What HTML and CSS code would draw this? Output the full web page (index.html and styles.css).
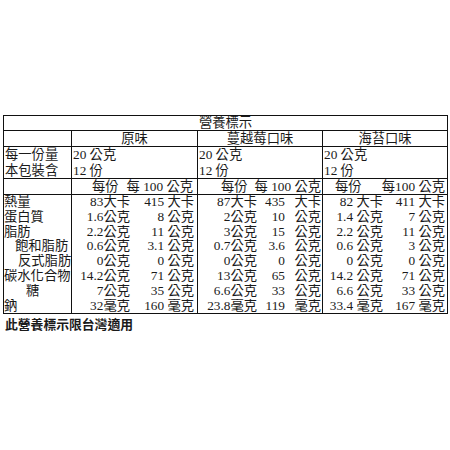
FILE: index.html
```html
<!DOCTYPE html>
<html lang="zh-Hant">
<head>
<meta charset="utf-8">
<title>營養標示</title>
<link rel="stylesheet" href="styles.css">
</head>
<body>
<div class="page">
  <table class="nut">
    <colgroup>
      <col class="c-label"><col class="c-f1"><col class="c-f2"><col class="c-f3">
    </colgroup>
    <tr class="r-title"><th colspan="4">營養標示</th></tr>
    <tr class="r-flavor"><th></th><th>原味</th><th>蔓越莓口味</th><th>海苔口味</th></tr>
    <tr class="r-serve">
      <td>每一份量<br>本包裝含</td>
      <td>20 公克<br>12 份</td>
      <td>20 公克<br>12 份</td>
      <td>20 公克<br>12 份</td>
    </tr>
    <tr class="r-sub">
      <td></td>
      <td><div class="hd h1"><span>每份</span><span>每 100 公克</span></div></td>
      <td><div class="hd h2"><span>每份</span><span>每 100 公克</span></div></td>
      <td><div class="hd h3"><span>每份</span><span>每100 公克</span></div></td>
    </tr>
    <tr class="r-data first">
      <td class="lb">熱量</td>
      <td><div class="g1"><span>83大卡</span><span>415 大卡</span></div></td>
      <td><div class="g2"><span>87大卡</span><span>435</span><span>大卡</span></div></td>
      <td><div class="g3"><span>82 大卡</span><span>411 大卡</span></div></td>
    </tr>
    <tr class="r-data">
      <td class="lb">蛋白質</td>
      <td><div class="g1"><span>1.6公克</span><span>8 公克</span></div></td>
      <td><div class="g2"><span>2公克</span><span>10</span><span>公克</span></div></td>
      <td><div class="g3"><span>1.4 公克</span><span>7 公克</span></div></td>
    </tr>
    <tr class="r-data">
      <td class="lb">脂肪</td>
      <td><div class="g1"><span>2.2公克</span><span>11 公克</span></div></td>
      <td><div class="g2"><span>3公克</span><span>15</span><span>公克</span></div></td>
      <td><div class="g3"><span>2.2 公克</span><span>11 公克</span></div></td>
    </tr>
    <tr class="r-data">
      <td class="lb ind1">飽和脂肪</td>
      <td><div class="g1"><span>0.6公克</span><span>3.1 公克</span></div></td>
      <td><div class="g2"><span>0.7公克</span><span>3.6</span><span>公克</span></div></td>
      <td><div class="g3"><span>0.6 公克</span><span>3 公克</span></div></td>
    </tr>
    <tr class="r-data">
      <td class="lb ind2">反式脂肪</td>
      <td><div class="g1"><span>0公克</span><span>0 公克</span></div></td>
      <td><div class="g2"><span>0公克</span><span>0</span><span>公克</span></div></td>
      <td><div class="g3"><span>0 公克</span><span>0 公克</span></div></td>
    </tr>
    <tr class="r-data">
      <td class="lb">碳水化合物</td>
      <td><div class="g1"><span>14.2公克</span><span>71 公克</span></div></td>
      <td><div class="g2"><span>13公克</span><span>65</span><span>公克</span></div></td>
      <td><div class="g3"><span>14.2 公克</span><span>71 公克</span></div></td>
    </tr>
    <tr class="r-data">
      <td class="lb ind3">糖</td>
      <td><div class="g1"><span>7公克</span><span>35 公克</span></div></td>
      <td><div class="g2"><span>6.6公克</span><span>33</span><span>公克</span></div></td>
      <td><div class="g3"><span>6.6 公克</span><span>33 公克</span></div></td>
    </tr>
    <tr class="r-data last">
      <td class="lb">鈉</td>
      <td><div class="g1"><span>32毫克</span><span>160 毫克</span></div></td>
      <td><div class="g2"><span>23.8毫克</span><span>119</span><span>毫克</span></div></td>
      <td><div class="g3"><span>33.4 毫克</span><span>167 毫克</span></div></td>
    </tr>
  </table>
  <p class="note">此營養標示限台灣適用</p>
</div>
</body>
</html>
```
FILE: styles.css
```css
html, body {
  margin: 0;
  padding: 0;
  background: #ffffff;
}

.page {
  padding: 115px 0 0 3px;
  font-family: "Liberation Serif", "Noto Sans CJK TC", serif;
  font-size: 13.3px;
  color: #1a1a1a;
}

.nut {
  border-collapse: collapse;
  table-layout: fixed;
  width: 445px;
}

.c-label { width: 68px; }
.c-f1 { width: 126px; }
.c-f2 { width: 125px; }
.c-f3 { width: 125px; }

.nut th,
.nut td {
  border: 1px solid #111;
  padding: 0;
  font-weight: normal;
  vertical-align: top;
  white-space: nowrap;
  overflow: hidden;
}

.r-title th {
  height: 14px;
  line-height: 14px;
  text-align: center;
}

.r-flavor th {
  height: 15px;
  line-height: 15px;
  text-align: center;
}

.r-serve td {
  height: 31px;
  line-height: 15.5px;
  text-align: left;
  padding-left: 1px;
}

.r-sub td {
  height: 15px;
  line-height: 15px;
}

.hd {
  display: flex;
  justify-content: space-between;
}
.h1 { padding: 0 4px 0 20px; }
.h2 { padding: 0 1px 0 23px; }
.h3 { padding: 0 2px 0 12px; }

.r-data td {
  border-top: none;
  border-bottom: none;
  height: 14.8px;
  line-height: 14.8px;
}
.r-data.first td { border-top: 1px solid #111; }
.r-data.last td { border-bottom: 1px solid #111; }

.lb { padding-left: 1px; }
.nut .ind1 { padding-left: 11px; }
.nut .ind2 { padding-left: 14px; }
.nut .ind3 { padding-left: 22px; }

.g1, .g2, .g3 {
  display: grid;
  text-align: right;
}
.g1 { grid-template-columns: 58px 1fr; padding-right: 3px; }
.g2 { grid-template-columns: 59px 28px 1fr; padding-right: 1px; }
.g3 { grid-template-columns: 60px 1fr; padding-right: 2px; }

.note {
  margin: 3px 0 0 2px;
  font-family: "Noto Sans CJK TC", sans-serif;
  font-weight: bold;
  font-size: 12.8px;
  line-height: 14px;
}
```
